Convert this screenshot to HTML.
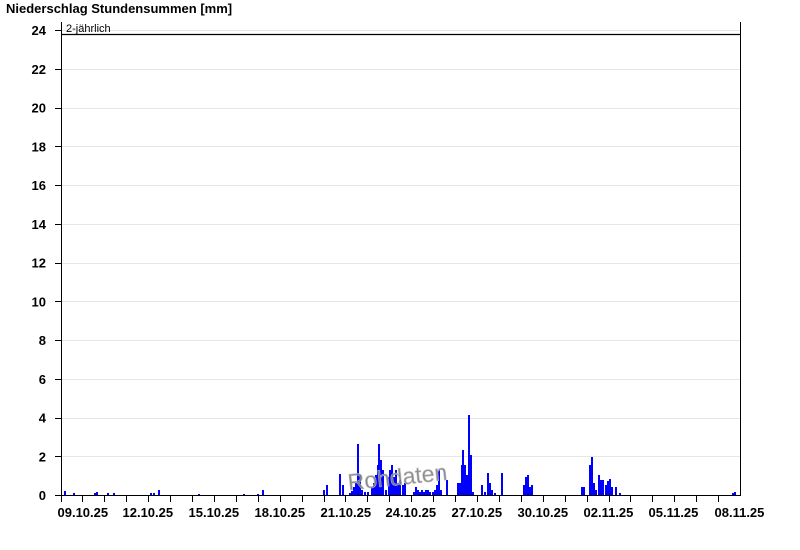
<!DOCTYPE html>
<html><head><meta charset="utf-8"><style>
html,body{margin:0;padding:0;background:#fff;width:800px;height:550px;overflow:hidden}
svg{display:block;font-family:"Liberation Sans",Arial,sans-serif}
</style></head><body>
<svg id="c" width="800" height="550" xmlns="http://www.w3.org/2000/svg">
<text x="6" y="13" font-size="13" font-weight="bold">Niederschlag Stundensummen [mm]</text>
<g id="grid"></g>
<g id="bars" fill="#0000ff"></g>
<line x1="61" y1="34.5" x2="740" y2="34.5" stroke="#000" stroke-width="1.3"/>
<text x="66" y="32" font-size="11">2-jährlich</text>
<line x1="61.5" y1="22" x2="61.5" y2="496" stroke="#000"/>
<line x1="740.5" y1="22" x2="740.5" y2="496" stroke="#000"/>
<line x1="55" y1="495.5" x2="741" y2="495.5" stroke="#000"/>
<g id="ticks"></g>
<text x="347" y="485" font-size="23" fill="#808080" stroke="#bbb" stroke-width="0.6" transform="rotate(-6 398 472)" opacity="0.9">Rohdaten</text>
</svg>
<script>
var ns="http://www.w3.org/2000/svg",g=document.getElementById('grid'),t=document.getElementById('ticks'),b=document.getElementById('bars');
function el(p,tag,a,txt){var e=document.createElementNS(ns,tag);for(var k in a)e.setAttribute(k,a[k]);if(txt)e.textContent=txt;p.appendChild(e);return e;}
for(var v=0;v<=24;v+=2){var y=495-v*19.375;
 if(v>0)el(g,'line',{x1:62,x2:740,y1:Math.round(y)+.5,y2:Math.round(y)+.5,stroke:'#e6e6e6'});
 el(t,'line',{x1:55,x2:61,y1:Math.round(y)+.5,y2:Math.round(y)+.5,stroke:'#000'});
 el(t,'text',{x:46,y:y+5,'font-size':13,'font-weight':'bold','text-anchor':'end'},String(v));}
var labs=['09.10.25','12.10.25','15.10.25','18.10.25','21.10.25','24.10.25','27.10.25','30.10.25','02.11.25','05.11.25','08.11.25'];
for(var d=0;d<=30;d++){var x=Math.round(60.5+d*21.92)+.5;
 el(t,'line',{x1:x,x2:x,y1:495,y2:502,stroke:'#000'});
 if(d%3==0)el(t,'text',{x:x-4,y:517,'font-size':13,'font-weight':'bold'},labs[d/3]);}
var bars=[[64,4],[73,2],[94,2],[96,3],[107,2],[113,2],[150,2],[153,2],[158,5],[198,1],[243,1],[257,1],[262,5],
[323,5],[326,10],[339,21],[342,10],[349,2],[351,4],[353,8],[355,12],[357,51],[359,20],[361,5],[364,3],[367,3],
[371,8],[373,12],[375,20],[377,30],[378,51],[380,35],[382,25],[385,5],[388,18],[389,25],[391,30],[393,18],[395,25],[397,12],[399,15],[402,10],[404,12],
[413,3],[415,8],[417,5],[419,3],[421,5],[423,3],[425,5],[427,5],[429,3],[432,3],[434,5],[436,10],[438,25],[440,5],[446,15],
[457,12],[459,12],[461,30],[462,45],[464,30],[466,20],[468,80],[470,40],[472,3],[481,10],[484,3],[487,22],[489,12],[491,5],[494,2],[501,22],
[523,10],[525,18],[527,20],[529,8],[531,10],[581,8],[583,8],[589,30],[591,38],[593,12],[595,5],[598,20],[600,15],[602,15],[605,10],[607,14],[609,16],[611,8],[615,8],[619,2],[732,2],[734,3]];
bars.forEach(function(p){el(b,'rect',{x:p[0],y:495-p[1],width:2,height:p[1]});});
</script>
</body></html>
